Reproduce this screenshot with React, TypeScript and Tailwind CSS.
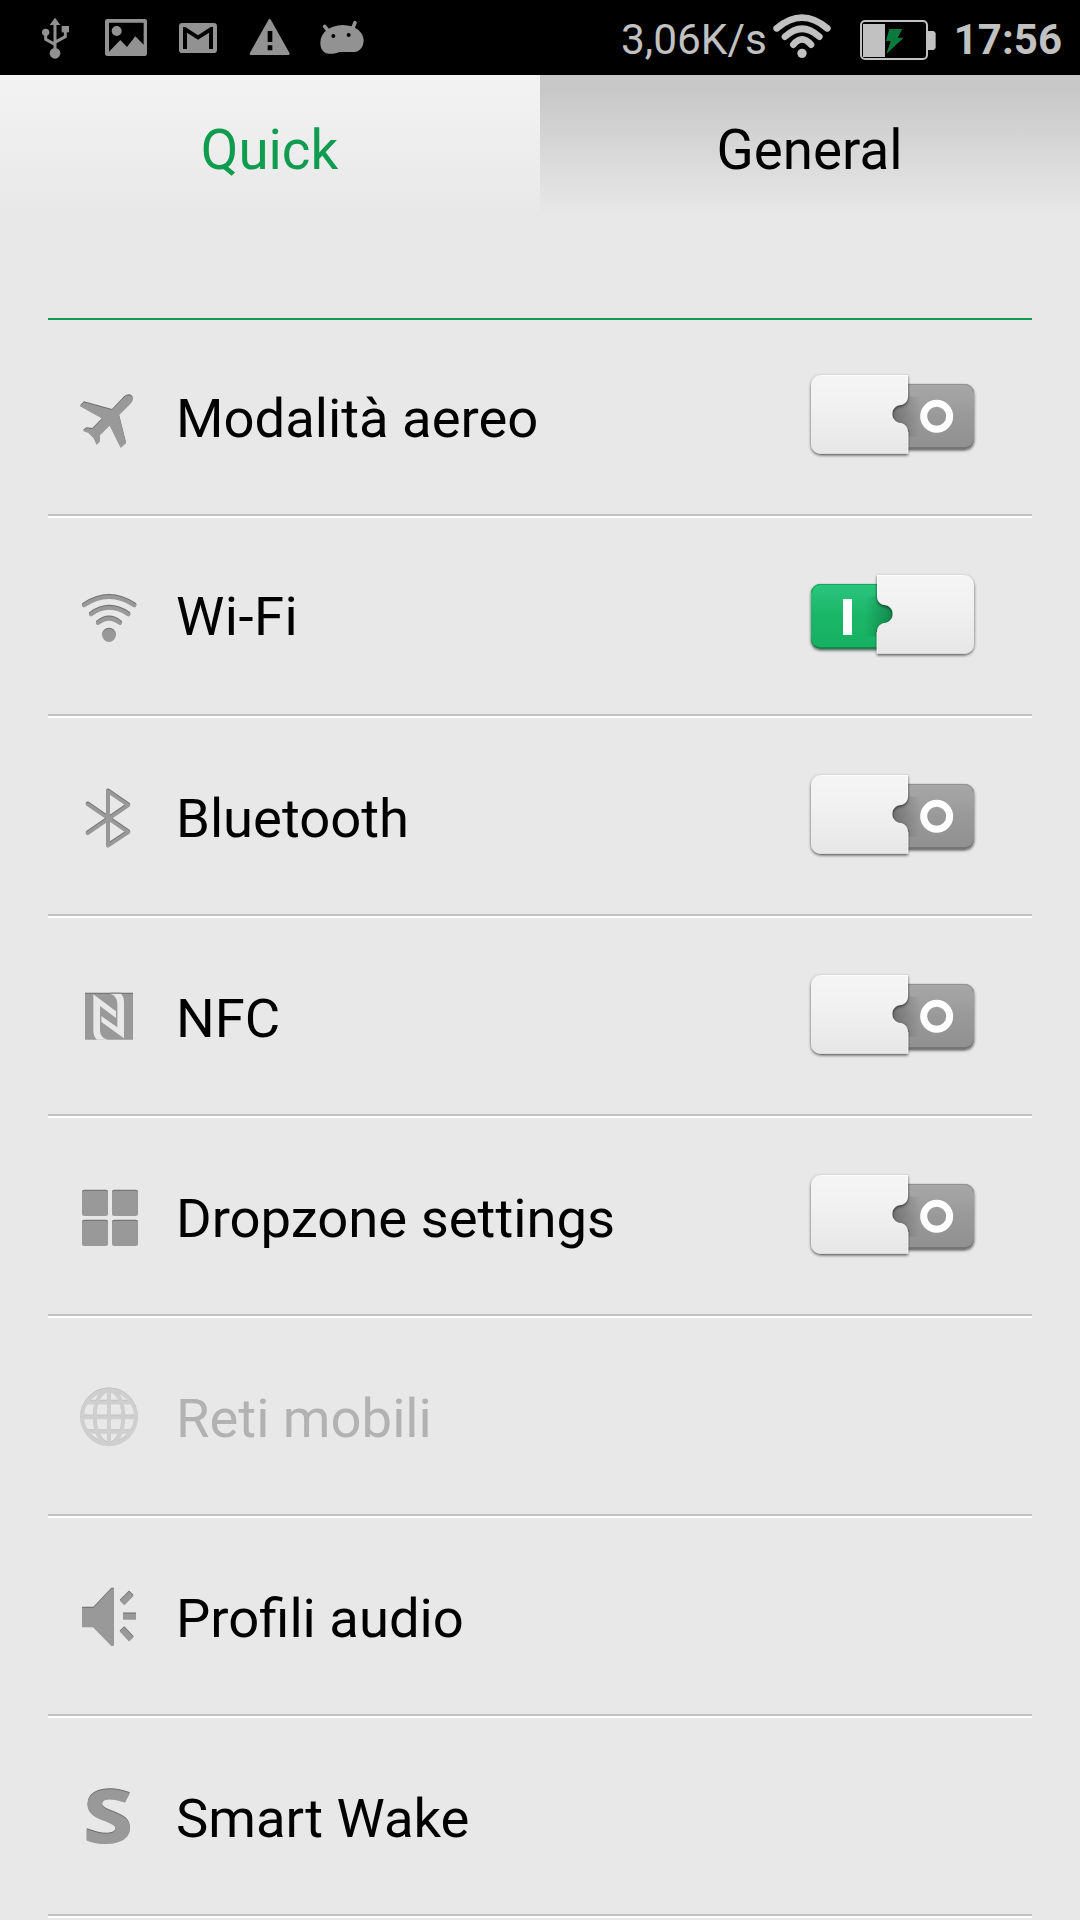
import React from "react";
import clsx from "clsx";

// status bar icons, each one sits in a 72px cell
function StatusIcon({ box, children }: { box: string; children: React.ReactNode }) {
  return (
    <svg className="w-[72px] h-[75px] fill-[#929292]" viewBox={box}>
      {children}
    </svg>
  );
}

function Statusbar() {
  return (
    <div className="w-full h-[75px] bg-black text-[#c1c1c1] flex items-center justify-between pl-[18px] pr-[18px]">
      <div className="flex">
        <StatusIcon box="54 0 216 225">
          <path d="M165 53L181 75H149Z" />
          <circle cx="165" cy="160" r="16" />
          <circle cx="137" cy="97" r="11" />
          <path d="M185 78H207V97H185Z" />
          <path d="M165 70V160M137 97V118L165 133M196 95V110L165 127" fill="none" stroke="#929292" strokeWidth="9" />
        </StatusIcon>
        <StatusIcon box="270 0 216 225">
          <path
            fillRule="evenodd"
            d="M322 57H434Q441 57 441 64V161Q441 168 434 168H322Q315 168 315 161V64Q315 57 322 57ZM327 68V155L361 120L381 141L406 109L431 134V68Z"
          />
          <circle cx="350" cy="93" r="15" />
        </StatusIcon>
        <StatusIcon box="486 0 216 225">
          <rect x="537" y="69" width="114" height="90" rx="10" />
          <path d="M549 147V81H556L594 106L632 81H639V147H627V98L594 119L561 98V147Z" fill="#000" />
        </StatusIcon>
        <StatusIcon box="702 0 216 225">
          <path
            d="M809 61L865 161H753Z"
            stroke="#929292"
            strokeWidth="8"
            strokeLinejoin="round"
          />
          <path d="M803 93H817V126H803ZM803 136H817V151H803Z" fill="#000" />
        </StatusIcon>
        <StatusIcon box="918 0 216 225">
          <path d="M961 128C962 96 990 76 1028 75C1066 76 1090 95 1091 120C1091 142 1078 155 1064 156H1018C1010 161 995 162 985 161C968 158 961 145 961 128Z" />
          <path d="M986 94L974 79M1058 86L1065 68" stroke="#929292" strokeWidth="11" strokeLinecap="round" />
          <circle cx="1000" cy="108" r="6" fill="#000" />
          <circle cx="1046" cy="105" r="6" fill="#000" />
        </StatusIcon>
      </div>
      <div className="flex items-center">
        <span className="text-[42.4px] leading-none mt-1.5">3,06K/s</span>
        <svg className="w-[66px] h-[75px] ml-0.5" viewBox="507 0 198 225" fill="none" stroke="#c1c1c1" strokeLinecap="round">
          <path d="M530 85Q606 21 682 85M555 110Q606 62 658 110M580 134Q606 102 633 134" strokeWidth="20" />
          <circle cx="606" cy="160" r="14" fill="#c1c1c1" stroke="none" />
        </svg>
        <svg className="w-20 h-[75px] ml-[23px]" viewBox="774 0 240 225">
          <rect x="783" y="63" width="198" height="114" rx="12" fill="none" stroke="#c1c1c1" strokeWidth="6" />
          <path d="M789 72H855V171H789Z" fill="#c1c1c1" />
          <path d="M984 93H1001L1007 99V144L1001 150H984Z" fill="#c1c1c1" />
          <path d="M868 87H907L893 113H911L859 162L872 123H858Z" fill="#0a7a3c" />
        </svg>
        <span className="text-[42px] leading-none font-bold ml-4 mt-1">17:56</span>
      </div>
    </div>
  );
}

// puzzle shaped switch, the "on" one is the same cover mirrored
function Toggle({ on, id }: { on: boolean; id: string }) {
  return (
    <svg className="w-[176px] h-24 mb-0.5" viewBox="72 51 528 288">
      <defs>
        <linearGradient id={id + "-base"} x1="0" y1="0" x2="0" y2="1">
          <stop offset="0" stopColor={on ? "#2bc57f" : "#a8a8a8"} />
          <stop offset="0.5" stopColor={on ? "#1ab667" : "#999999"} />
          <stop offset="1" stopColor={on ? "#17b062" : "#919191"} />
        </linearGradient>
        <linearGradient id={id + "-cover"} x1="0" y1="0" x2="0" y2="1">
          <stop offset="0" stopColor="#f5f5f5" />
          <stop offset="0.4" stopColor="#f1f1f1" />
          <stop offset="1" stopColor="#e6e6e6" />
        </linearGradient>
        <linearGradient id={id + "-shade"} x1="0" y1="0" x2="1" y2="0">
          <stop offset="0" stopColor="#000" stopOpacity="0.28" />
          <stop offset="1" stopColor="#000" stopOpacity="0" />
        </linearGradient>
        <filter id={id + "-shadow"} x="-10%" y="-10%" width="120%" height="125%">
          <feDropShadow dx="0" dy="4" stdDeviation="4" floodColor="#000" floodOpacity="0.65" />
        </filter>
      </defs>
      <g transform={on ? "translate(675 0) scale(-1 1)" : undefined}>
        <g filter={`url(#${id}-shadow)`}>
          <rect x="320" y="102" width="262" height="195" rx="28" fill={on ? "#0b8a4a" : "#747474"} />
        </g>
        <rect x="320" y="102" width="262" height="189" rx="27" fill={`url(#${id}-base)`} />
        <path d="M348 103.500H554A26 26 0 0 1 580 129" fill="none" stroke={on ? "#15a85b" : "#929292"} strokeWidth="3" />
        <rect x="330" y="140" width="90" height="120" fill={`url(#${id}-shade)`} />
        <g filter={`url(#${id}-shadow)`}>
          <path
            d="M123 75H384V138C384 154 374 163 362 165C347 166 337 177 337 192C337 207 347 217 362 219C374 221 384 230 384 246V312H123A30 30 0 0 1 93 282V105A30 30 0 0 1 123 75Z"
            fill={`url(#${id}-cover)`}
          />
        </g>
        <path d="M384 246V312M123 76.500H382.500V138" fill="none" stroke="#fff" strokeOpacity="0.8" strokeWidth="3" />
        <path d="M118 310.500H384" stroke="#d6d6d6" strokeWidth="3" />
      </g>
      {on ? (
        <rect x="189" y="147" width="27" height="108" fill="#fff" />
      ) : (
        <circle cx="470" cy="199" r="39" fill="none" stroke="#fff" strokeWidth="21" />
      )}
    </svg>
  );
}

type Item = {
  name: string;
  box: string;
  icon: React.ReactNode;
  on?: boolean;
  disabled?: boolean;
};

const items: Item[] = [
  {
    name: "Modalità aereo",
    box: "84 48 240 240",
    on: false,
    icon: (
      <path d="M252 112Q261 105 269 106Q280 110 278 120Q277 126 270 133L237 166L258 250L242 264L209 197L180 226V244L170 255L161 235L145 219L129 213L139 205L157 207L187 176L120 139L132 127L216 150Z" />
    ),
  },
  {
    name: "Wi-Fi",
    box: "84 648 240 240",
    on: true,
    icon: (
      <>
        <path
          d="M132 736Q207 686 283 736M153 763Q207 724 265 763M174 789Q207 763 240 789"
          fill="none"
          stroke="#999"
          strokeWidth="12"
          strokeLinecap="round"
        />
        <circle cx="207" cy="826" r="20" />
      </>
    ),
  },
  {
    name: "Bluetooth",
    box: "84 47 240 240",
    on: false,
    icon: (
      <path
        d="M143 132L265 216L204 256V93L265 135L143 219"
        fill="none"
        stroke="#999"
        strokeWidth="11"
        strokeLinecap="round"
        strokeLinejoin="round"
      />
    ),
  },
  {
    name: "NFC",
    box: "84 647 240 240",
    on: false,
    icon: (
      <>
        <path d="M135 700H279V838H135Z" />
        <path
          d="M160 702L228 753V773L180 737V811Q181 832 204 838H171Q160 828 160 811ZM252 834L184 785V767L232 801V729Q231 706 210 700H243Q252 709 252 727Z"
          fill="#e8e8e8"
        />
      </>
    ),
  },
  {
    name: "Dropzone settings",
    box: "0 0 240 240",
    on: false,
    icon: (
      <>
        <rect x="42" y="44" width="78" height="76" rx="7" />
        <rect x="132" y="44" width="78" height="76" rx="7" />
        <rect x="42" y="134" width="78" height="76" rx="7" />
        <rect x="132" y="134" width="78" height="76" rx="7" />
      </>
    ),
  },
  {
    name: "Reti mobili",
    box: "0 -1 240 240",
    disabled: true,
    icon: (
      <g fill="none" stroke="#999" strokeWidth="11">
        <circle cx="123" cy="123" r="81" />
        <ellipse cx="123" cy="123" rx="43" ry="81" />
        <path d="M123 42V204M42 123H204M58 79H188M58 167H188" />
      </g>
    ),
  },
  {
    name: "Profili audio",
    box: "84 48 240 240",
    icon: (
      <>
        <path d="M126 143H160L214 86H221V258H214L159 202H126Z" />
        <path d="M246 129L274 101M249 170H288M246 208L274 238" stroke="#999" strokeWidth="19" />
      </>
    ),
  },
  {
    name: "Smart Wake",
    box: "84 648 240 240",
    icon: (
      <text
        x="130"
        y="849"
        className="font-['Open_Sans'] font-bold text-[220px]"
        stroke="#999"
        strokeWidth="3"
        textLength="149"
        lengthAdjust="spacingAndGlyphs"
      >
        S
      </text>
    ),
  },
];

function Row({ item, id }: { item: Item; id: string }) {
  return (
    <li className="h-[200px] border-b-2 border-white">
      <div className="h-[198px] pl-5 pr-[52px] border-b-2 border-[#c1c1c1] flex items-center">
        <svg
          className={clsx(
            "size-20 overflow-visible fill-[#999] drop-shadow-[0_-1px_0_#6c6c6c]",
            item.disabled && "opacity-30"
          )}
          viewBox={item.box}
        >
          {item.icon}
        </svg>
        <span
          className={clsx(
            "ml-[28px] flex-1 text-[54.4px] leading-none",
            item.name === "Wi-Fi" ? "pt-0.5 tracking-[0.5px]" : "pt-1.5",
            item.disabled && "text-[#b2b2b2]"
          )}
        >
          {item.name}
        </span>
        {item.on !== undefined && <Toggle on={item.on} id={id} />}
      </div>
    </li>
  );
}

export default function App() {
  return (
    <div className="w-[1080px] h-[1920px] overflow-hidden bg-[#e8e8e8] text-black font-[Roboto,sans-serif]">
      <Statusbar />
      {/* tabs */}
      <div className="grid grid-cols-2 h-[140px] text-[54.7px] leading-none">
        <div className="flex justify-center pt-12 pr-px bg-linear-to-b from-[#f3f3f3] to-[#e8e8e8] text-[#0f9b50]">Quick</div>
        <div className="flex justify-center pt-12 pr-px bg-linear-to-b from-[#c8c8c8] from-10% to-[#e8e8e8]">General</div>
      </div>
      <div className="mx-12 mt-[103px] h-0.5 -mb-0.5 bg-[#0f9b50]" />
      <ul className="mx-12">
        {items.map((item, i) => (
          <Row key={item.name} item={item} id={`toggle${i}`} />
        ))}
      </ul>
    </div>
  );
}
